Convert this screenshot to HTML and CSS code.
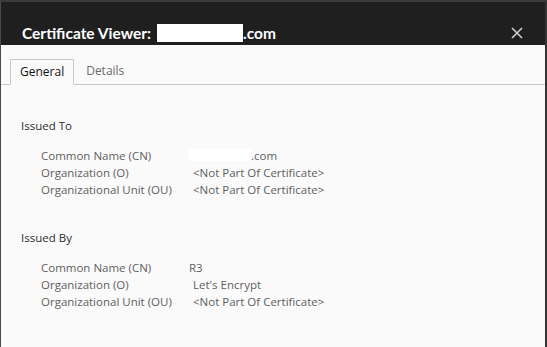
FILE: index.html
```html
<!DOCTYPE html>
<html lang="en">

<head>
  <meta charset="UTF-8" />
  <title>Certificate Viewer</title>
  <link rel="stylesheet" href="styles.css">
</head>

<body>
  <div class="viewer">
    <div class="header">
      <h1 class="title">Certificate Viewer: <span class="redacted redacted-title"></span>.com</h1>
      <button class="close" aria-label="Close">
        <svg width="12" height="12" viewBox="0 0 12 12">
          <path d="M1 1 L11 11 M11 1 L1 11" stroke="#cfcfcf" stroke-width="1.6" />
        </svg>
      </button>
    </div>

    <div class="tabs">
      <div class="tab active">General</div>
      <div class="tab">Details</div>
    </div>

    <div class="content">
      <div class="section">
        <div class="section-title">Issued To</div>
        <div class="fields">
          <div class="field-name">Common Name (CN)</div>
          <div class="field-value shift"><span class="redacted redacted-cn"></span>.com</div>
          <div class="field-name">Organization (O)</div>
          <div class="field-value">&lt;Not Part Of Certificate&gt;</div>
          <div class="field-name">Organizational Unit (OU)</div>
          <div class="field-value">&lt;Not Part Of Certificate&gt;</div>
        </div>
      </div>

      <div class="section">
        <div class="section-title">Issued By</div>
        <div class="fields">
          <div class="field-name">Common Name (CN)</div>
          <div class="field-value shift">R3</div>
          <div class="field-name">Organization (O)</div>
          <div class="field-value">Let's Encrypt</div>
          <div class="field-name">Organizational Unit (OU)</div>
          <div class="field-value">&lt;Not Part Of Certificate&gt;</div>
        </div>
      </div>
    </div>
  </div>
</body>

</html>
```

FILE: styles.css
```css
html,
body {
  margin: 0;
  height: 100%;
}

body {
  font-family: "Open Sans", "Noto Sans", sans-serif;
  background: #fafafa;
}

.viewer {
  box-sizing: border-box;
  height: 100vh;
  border-top: 2px solid #3a3a3a;
  border-left: 1px solid #4a4a4a;
  border-right: 2px solid #333;
  background: #fafafa;
}

.header {
  height: 43px;
  background: #1f1f1f;
  display: flex;
  align-items: flex-end;
  justify-content: space-between;
  padding: 0 22px 0 21px;
}

.title {
  margin: 0 0 1px 0;
  color: #fff;
  font-family: Lato, "Open Sans", sans-serif;
  font-size: 15.5px;
  font-weight: 700;
  line-height: 22px;
  display: flex;
  align-items: center;
}

.redacted {
  display: inline-block;
  background: #fff;
}

.redacted-title {
  width: 86px;
  height: 18px;
  margin-left: 6px;
}

.close {
  background: none;
  border: none;
  padding: 0;
  margin-bottom: 6px;
  width: 12px;
  height: 12px;
  display: flex;
}

.tabs {
  display: flex;
  margin-top: 14px;
  padding-left: 9px;
  border-bottom: 1px solid #c9c9c9;
  height: 25px;
}

.tab {
  font-size: 12px;
  color: #6b6b6b;
  padding: 0 12px 0 12px;
  line-height: 24px;
  margin-bottom: -1px;
}

.tab.active {
  color: #111;
  background: #fafafa;
  border: 1px solid #c9c9c9;
  border-bottom: 1px solid #fafafa;
  padding: 0 9px;
}

.content {
  padding: 32px 20px 0 20px;
  font-size: 11.5px;
}

.section {
  margin-bottom: 31px;
}

.section-title {
  color: #2b2b2b;
  height: 17px;
  line-height: 17px;
  margin-bottom: 13px;
}

.fields {
  display: grid;
  grid-template-columns: 152px 1fr;
  grid-auto-rows: 17px;
  padding-left: 20px;
  line-height: 17px;
  color: #5e5e5e;
}

.field-value.shift {
  margin-left: -4px;
}

.redacted-cn {
  width: 62px;
  height: 12px;
  vertical-align: -1px;
}
```
